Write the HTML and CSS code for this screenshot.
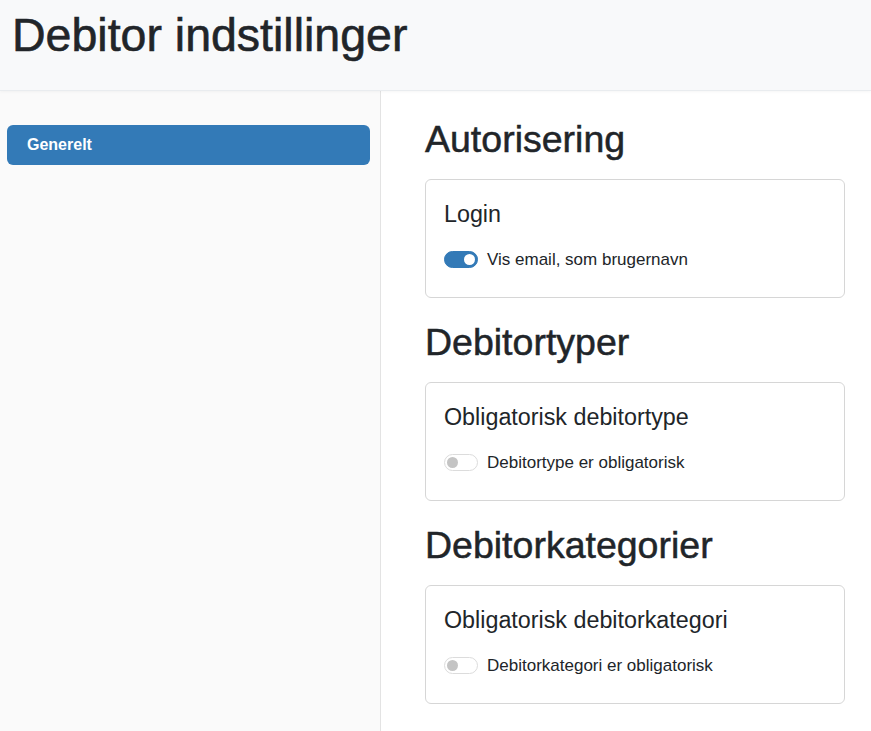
FILE: index.html
```html
<!DOCTYPE html>
<html lang="da">
<head>
<meta charset="utf-8">
<title>Debitor indstillinger</title>
<link rel="stylesheet" href="styles.css">
</head>
<body>
<header class="page-header">
  <h1 class="page-title">Debitor indstillinger</h1>
</header>
<div class="layout">
  <nav class="sidebar">
    <a class="nav-item active" href="#">Generelt</a>
  </nav>
  <main class="content">
    <section class="section">
      <h2 class="section-title">Autorisering</h2>
      <div class="card">
        <h5 class="card-title">Login</h5>
        <label class="switch-row">
          <span class="switch on"><span class="knob"></span></span>
          <span class="switch-label">Vis email, som brugernavn</span>
        </label>
      </div>
    </section>
    <section class="section">
      <h2 class="section-title">Debitortyper</h2>
      <div class="card">
        <h5 class="card-title">Obligatorisk debitortype</h5>
        <label class="switch-row">
          <span class="switch"><span class="knob"></span></span>
          <span class="switch-label">Debitortype er obligatorisk</span>
        </label>
      </div>
    </section>
    <section class="section">
      <h2 class="section-title">Debitorkategorier</h2>
      <div class="card">
        <h5 class="card-title">Obligatorisk debitorkategori</h5>
        <label class="switch-row">
          <span class="switch"><span class="knob"></span></span>
          <span class="switch-label">Debitorkategori er obligatorisk</span>
        </label>
      </div>
    </section>
  </main>
</div>
</body>
</html>
```

FILE: styles.css
```css
* { box-sizing: border-box; }
html, body { height: 100%; }
body {
  margin: 0;
  font-family: "Liberation Sans", Arial, sans-serif;
  color: #212529;
  background: #fff;
  display: flex;
  flex-direction: column;
  overflow: hidden;
}
.page-header {
  background: #f8f9fa;
  border-bottom: 1px solid #e9ecef;
  box-shadow: 0 1px 3px rgba(0,0,0,0.04);
  padding: 8px 12px 26px;
  height: 91px;
  position: relative;
  z-index: 1;
}
.page-title {
  margin: 0;
  font-size: 46.5px;
  font-weight: 400;
  -webkit-text-stroke: 0.6px #212529;
  line-height: 1.2;
}
.layout {
  flex: 1;
  display: flex;
}
.sidebar {
  width: 381px;
  flex: none;
  background: #fafafa;
  border-right: 1px solid #e3e3e3;
  padding: 34px 10px 0 7px;
}
.nav-item {
  display: block;
  height: 40px;
  line-height: 40px;
  padding: 0 20px;
  border-radius: 6px;
  text-decoration: none;
  font-size: 16px;
  font-weight: 700;
  color: #fff;
  background: #337ab7;
}
.content {
  flex: 1;
  padding: 25.5px 26px 0 44px;
}
.section-title {
  margin: 0 0 17.5px;
  font-size: 37.5px;
  font-weight: 400;
  -webkit-text-stroke: 0.5px #212529;
  line-height: 1.2;
}
.section + .section { margin-top: 21.5px; }
.card {
  height: 119px;
  border: 1px solid #d6d6d6;
  border-radius: 6px;
  padding: 21px 18px 0;
  background: #fff;
}
.card-title {
  margin: 0 0 18px;
  font-size: 23.3px;
  font-weight: 400;
  line-height: 1.2;
}
.switch-row {
  display: flex;
  align-items: center;
  gap: 9px;
  font-size: 17px;
  line-height: 25.5px;
}
.switch {
  width: 34px;
  height: 17px;
  border-radius: 9px;
  border: 1px solid #dcdcdc;
  background: #fff;
  display: flex;
  align-items: center;
  padding: 0 2px;
  flex: none;
}
.switch .knob {
  width: 11px;
  height: 11px;
  border-radius: 50%;
  background: #c4c4c4;
}
.switch.on {
  background: #337ab7;
  border-color: #337ab7;
  justify-content: flex-end;
}
.switch.on .knob { background: #fff; }
```
